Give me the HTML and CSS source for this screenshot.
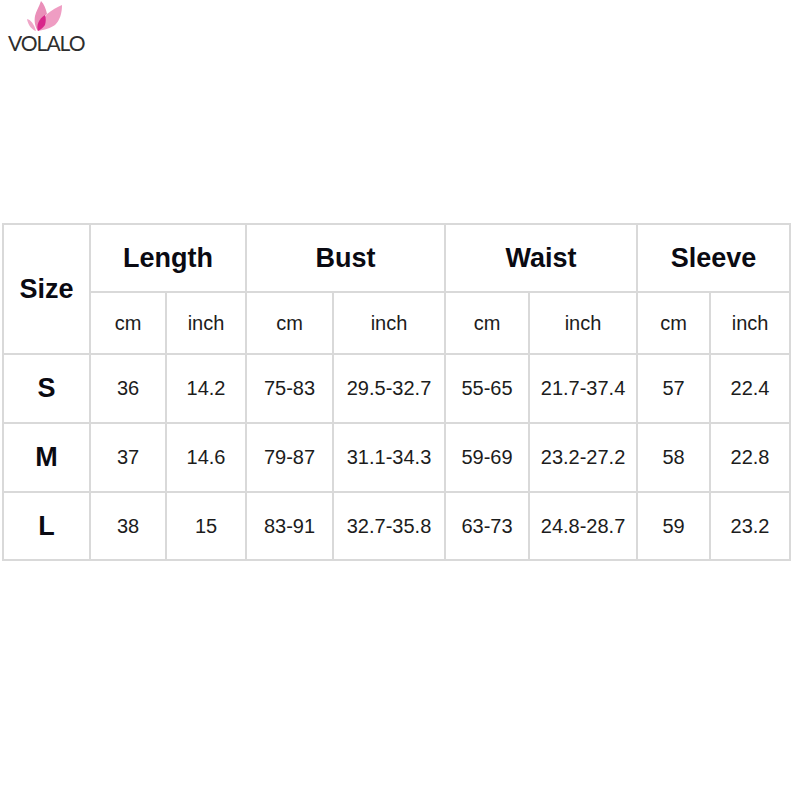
FILE: index.html
```html
<!DOCTYPE html>
<html lang="en">
<head>
<meta charset="utf-8">
<title>VOLALO size chart</title>
<link rel="stylesheet" href="styles.css">
</head>
<body>
<header class="logo">
<svg class="logo-mark" width="40" height="33" viewBox="0 0 40 33" aria-hidden="true">
<path d="M15 1C18 4 20 9 21 14C17 17 14 23 12 31C9 27 8 21 9 16C10 11 13 7 15 1Z" fill="#ea8fb9"/>
<path d="M36 5C36 13 34 20 29 25C25 28 18 30 12 31C15 24 18 18 21 14C26 10 31 7 36 5Z" fill="#ef9dc3"/>
<path d="M1 19C5 20 8 24 10 31C6 30 2 25 1 19Z" fill="#efa6c8"/>
<path d="M12 31C10 25 13 19 19 15C20 18 20 21 19 25C17 28 14 30 12 31Z" fill="#d8268a"/>
</svg>
<div class="logo-text">VOLALO</div>
</header>
<table class="chart">
<colgroup>
<col class="c1"><col class="c2"><col class="c3"><col class="c4"><col class="c5"><col class="c6"><col class="c7"><col class="c8"><col class="c9">
</colgroup>
<tbody>
<tr class="r1"><th rowspan="2" class="size-head">Size</th><th colspan="2">Length</th><th colspan="2">Bust</th><th colspan="2">Waist</th><th colspan="2">Sleeve</th></tr>
<tr class="r2"><td>cm</td><td>inch</td><td>cm</td><td>inch</td><td>cm</td><td>inch</td><td>cm</td><td>inch</td></tr>
<tr class="r3"><th>S</th><td>36</td><td>14.2</td><td>75-83</td><td>29.5-32.7</td><td>55-65</td><td>21.7-37.4</td><td>57</td><td>22.4</td></tr>
<tr class="r4"><th>M</th><td>37</td><td>14.6</td><td>79-87</td><td>31.1-34.3</td><td>59-69</td><td>23.2-27.2</td><td>58</td><td>22.8</td></tr>
<tr class="r5"><th>L</th><td>38</td><td>15</td><td>83-91</td><td>32.7-35.8</td><td>63-73</td><td>24.8-28.7</td><td>59</td><td>23.2</td></tr>
</tbody>
</table>
</body>
</html>
```
FILE: styles.css
```css
html, body { margin: 0; padding: 0; background: #fff; }
body { width: 800px; height: 800px; overflow: hidden; font-family: "Liberation Sans", Arial, sans-serif; color: #111; }
.logo { height: 223px; padding-left: 8px; box-sizing: border-box; }
.logo-mark { display: block; margin-left: 18px; }
.logo-text { font-family: Lato, "Liberation Sans", sans-serif; font-weight: 400; font-size: 21px; line-height: 20px; letter-spacing: -1px; color: #2e2e2e; }
.chart { border-collapse: collapse; table-layout: fixed; width: 788px; margin-left: 2px; }
.c1 { width: 87px; } .c2 { width: 76px; } .c3 { width: 80px; } .c4 { width: 87px; } .c5 { width: 112px; }
.c6 { width: 84px; } .c7 { width: 108px; } .c8 { width: 73px; } .c9 { width: 80px; }
th, td { border: 2px solid #d9d9d9; padding: 0; text-align: center; vertical-align: middle; }
th { font-size: 27px; font-weight: 700; color: #0a0a12; }
td { font-size: 20px; color: #1c1c1c; }
.r1 { height: 68px; } .r2 { height: 62px; } .r3 { height: 69px; } .r4 { height: 69px; } .r5 { height: 68px; }
```
